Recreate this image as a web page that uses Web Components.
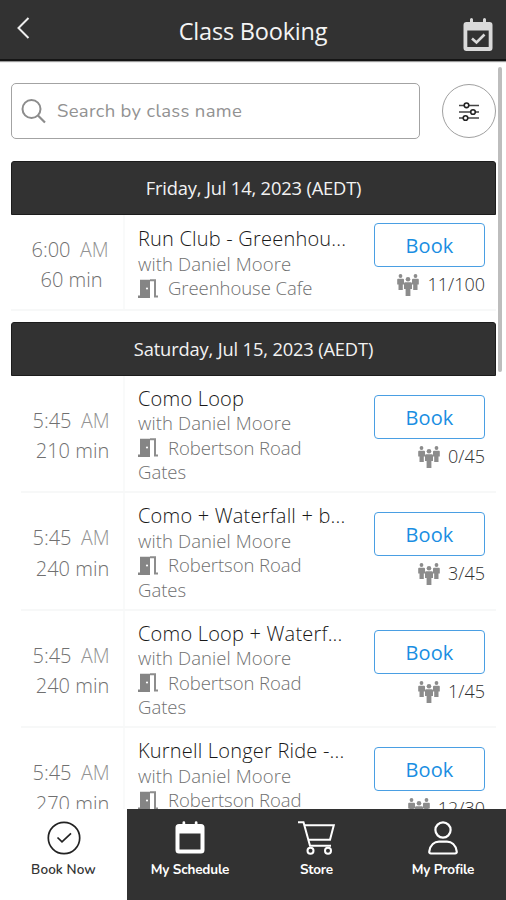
<!DOCTYPE html>
<html lang="en">
<head>
<meta charset="utf-8">
<title>Class Booking</title>
<style>
html,body{margin:0;height:100%;overflow:hidden;background:#fff}
body{font-family:"Open Sans","Noto Sans",sans-serif}
</style>
</head>
<body>
<booking-app></booking-app>
<script>
const icons = {
  back: [14,24,'<path d="M12.500 1 2.500 11 12.500 21" fill="none" stroke="#eee" stroke-width="2"/>'],
  calcheck: [30,33,'<path d="M3.500 4H7V1.500a1.500 1.500 0 0 1 3 0V4h10V1.500a1.500 1.500 0 0 1 3 0V4h3.500A3 3 0 0 1 29.500 7v23a3 3 0 0 1-3 3h-23a3 3 0 0 1-3-3V7a3 3 0 0 1 3-3z" fill="#d9d9d9"/><path d="M4.300 12.500h21.400v16.500H4.300z" fill="#323232"/><path d="m9 20.500 4.500 4 8-8" fill="none" stroke="#d9d9d9" stroke-width="2.600"/>'],
  search: [24,24,'<circle cx="10.500" cy="10" r="9" fill="none" stroke="#8c8c8c" stroke-width="2"/><path d="m17 16.500 7 7" stroke="#8c8c8c" stroke-width="2.200"/>'],
  filter: [20,20,'<path d="M0 4.500h20M0 11h20M0 17h20" stroke="#444" stroke-width="1.700"/><g fill="#fff" stroke="#222" stroke-width="1.600"><circle cx="7.500" cy="4.300" r="2.300"/><circle cx="14" cy="11" r="2.300"/><circle cx="6.500" cy="17" r="2.300"/></g>'],
  door: [20,19,'<path d="M0 16.500h2V.700h10V19H0z" fill="#858585"/><path d="M12 1.300h5v16.200h3" fill="none" stroke="#8d8d8d" stroke-width="2"/><circle cx="9" cy="9.500" r="1.100" fill="#fff"/>'],
  people: [22,22,'<g fill="#8c8c8c"><circle cx="3.500" cy="2" r="1.900"/><path d="M1 4.700h5q1 0 1 1v4.800H5.800V16H1.500v-5.500H.200V5.700q0-1 .8-1z"/><circle cx="18.500" cy="2" r="1.900"/><path d="M16 4.700h5q.8 0 .8 1v4.800h-1.300V16h-4.300v-5.500H15V5.700q0-1 1-1z"/><circle cx="11" cy="5.200" r="2.300"/><path d="M8.300 8.300h5.400q1.300 0 1.300 1.300v5.300h-1.600V22H8.600v-7.100H7V9.600q0-1.300 1.300-1.300z"/></g>'],
  check: [34,34,'<circle cx="17" cy="17" r="15.700" fill="none" stroke="#222" stroke-width="1.700"/><path d="m10.500 16.500 4.500 4.300 9-8.500" fill="none" stroke="#222" stroke-width="1.700"/>'],
  calendar: [30,33,'<path d="M4 3h3.500V1.500a1.200 1.200 0 0 1 2.700 0V3h9.600V1.500a1.200 1.200 0 0 1 2.700 0V3H26a3.500 3.500 0 0 1 3.500 3.500V29a3.500 3.500 0 0 1-3.500 3.500H4A3.500 3.500 0 0 1 .5 29V6.500A3.500 3.500 0 0 1 4 3z" fill="#fff"/><path d="M4.500 12.500h21v16h-21z" fill="#323232"/>'],
  cart: [38,34,'<g fill="none" stroke="#fff" stroke-width="2"><path d="M0 1.300h5.500l6.500 23.500h21"/><path d="M6.500 4.300h29.300L32 18.700H10.500"/><circle cx="12.500" cy="29.700" r="3"/><circle cx="30" cy="29.700" r="3"/></g>'],
  user: [30,34,'<g fill="none" stroke="#fff" stroke-width="2.200"><circle cx="15" cy="9" r="7.600"/><path d="M3 32.500q-2 0-1.700-2.200C2.300 24 6.500 20.700 11 20.700h8c4.500 0 8.700 3.300 9.700 9.600q.3 2.200-1.700 2.200z"/></g>']
};
const define = (name, css, html) => customElements.define(name, class extends HTMLElement {
  connectedCallback() {
    const a = n => this.getAttribute(n) || '';
    this.attachShadow({mode:'open'}).innerHTML =
      `<style>*{box-sizing:border-box}:host{box-sizing:border-box;display:block}${css}</style>${html(a)}`;
  }
});
define('ui-icon', ':host{flex:none}svg{display:block;overflow:visible}', a => {
  const [w,h,body] = icons[a('name')];
  return `<svg width="${w}" height="${h}" viewBox="0 0 ${w} ${h}">${body}</svg>`;
});
define('app-header', `
  :host{height:61px;flex:none;background:#323232;border-bottom:2px solid #151515;box-shadow:0 1px 1px #999;display:grid;grid-template-columns:60px 1fr 60px;position:relative;z-index:1}
  .back{padding:17px 0 0 16px}.cal{padding:18px 0 0 17px}
  h1{margin:0;text-align:center;font-size:23.5px;font-weight:400;line-height:62px;color:#f4f4f4;white-space:nowrap;letter-spacing:-.2px}`,
  () => `<ui-icon class="back" name="back"></ui-icon><h1><slot></slot></h1><ui-icon class="cal" name="calcheck"></ui-icon>`);
define('search-bar', `
  :host{display:flex;justify-content:space-between;height:56px;margin:22px 10px 0 11px}
  .box{width:409px;border:1.5px solid #a3a3a3;border-radius:5px;display:flex;align-items:center;gap:12px;padding-left:9px;color:#929292;font:400 18.500px/52px Nunito,"Open Sans",sans-serif;letter-spacing:.32px}
  .box span{margin-top:-1px}
  .round{width:54px;height:54px;margin-top:1px;border:1.5px solid #a0a0a0;border-radius:50%;display:grid;place-items:center}`,
  () => `<div class="box"><ui-icon name="search"></ui-icon><span><slot></slot></span></div><div class="round"><ui-icon name="filter"></ui-icon></div>`);
define('day-bar', `
  :host{height:54px;margin:0 10px 0 11px;background:#323232;border:1px solid #1c1c1c;border-radius:3px 3px 0 0;color:#f2f2f2;text-align:center;font-size:18.3px;line-height:52px;letter-spacing:-.15px;flex:none}`,
  () => `<slot></slot>`);
define('class-row', `
  :host{display:grid;grid-template-columns:104px 1fr 122px;margin:0 10px 0 21px;border-bottom:2px solid #f7f8f8;height:117.5px;flex:none;font-weight:320}
  :host([short]){height:96px;margin-left:11px;grid-template-columns:114px 1fr 122px}
  .time{border-right:2px solid #f9fafa;display:flex;flex-direction:column;justify-content:center;align-items:center;color:#707070;font-size:20px;line-height:30.500px;white-space:pre;padding-top:6px}
  :host([short]) .time{padding-left:8px}
  .time .t{margin-left:-2px}
  .time i{font-style:normal;color:#939393;font-size:19.5px;font-weight:300;margin-left:-1px}
  .time .len{margin-left:1px}
  .info{padding:11px 0 0 13px;color:#707070;font-size:18.5px;line-height:24.500px;white-space:nowrap}
  :host([short]) .info{padding-top:12px}
  .title{font-size:20px;color:#181818;letter-spacing:.2px}
  .who{letter-spacing:.1px}
  .loc{display:grid;grid-template-columns:20px auto;column-gap:10px;align-items:center;justify-content:start;letter-spacing:-.05px}
  .act{padding-top:19px}
  :host([short]) .act{padding-top:8px}
  .btn{width:111px;height:44px;border:1.5px solid #4a9fe3;border-radius:4px;color:#1a8ee2;font-size:20px;line-height:43px;text-align:center;letter-spacing:.1px;font-weight:400}
  .count{width:111px;display:flex;justify-content:flex-end;gap:8px;color:#303030;font-size:18px;line-height:34px}
  .count ui-icon{margin-top:7px}`,
  a => `<div class="time"><span class="t">${a('time')}  <i>AM</i></span><span class="len">${a('length')}</span></div>
  <div class="info"><div class="title">${a('name')}</div><div class="who">with Daniel Moore</div>
  <div class="loc"><ui-icon name="door"></ui-icon><span>${a('place')}</span></div><div class="wrap">${a('place2')}</div></div>
  <div class="act"><div class="btn">Book</div><div class="count"><ui-icon name="people"></ui-icon><span>${a('count')}</span></div></div>`);
define('nav-item', `
  :host{display:flex;flex-direction:column;align-items:center;background:#323232;color:#fff;font:700 13.500px/18px Nunito,"Open Sans",sans-serif;padding-top:12px;gap:6px;white-space:nowrap;letter-spacing:-.15px}
  :host([active]){background:#fff;color:#333;font-weight:600;letter-spacing:.1px}
  ui-icon{height:34px}`,
  a => `<ui-icon name="${a('icon')}"></ui-icon><slot></slot>`);
define('nav-bar', `:host{position:absolute;left:0;right:0;bottom:0;height:91px;display:grid;grid-template-columns:127px 126px 127px 126px}`, () => `<slot></slot>`);
define('booking-app', `
  :host{height:900px;width:506px;position:relative;overflow:hidden;display:flex;flex-direction:column;background:#fff}
  search-bar{flex:none;margin-bottom:22px}
  .gap{margin-top:10.5px}
  .scroll{position:absolute;left:498px;top:67px;width:4px;height:305px;background:#bdbdbd;border-radius:2px}`,
  () => `<app-header>Class Booking</app-header><search-bar>Search by class name</search-bar>
  <day-bar>Friday, Jul 14, 2023 (AEDT)</day-bar>
  <class-row short time="6:00" length="60 min" name="Run Club - Greenhou..." place="Greenhouse Cafe" count="11/100"></class-row>
  <day-bar class="gap">Saturday, Jul 15, 2023 (AEDT)</day-bar>
  <class-row time="5:45" length="210 min" name="Como Loop" place="Robertson Road" place2="Gates" count="0/45"></class-row>
  <class-row time="5:45" length="240 min" name="Como + Waterfall + b..." place="Robertson Road" place2="Gates" count="3/45"></class-row>
  <class-row time="5:45" length="240 min" name="Como Loop + Waterf..." place="Robertson Road" place2="Gates" count="1/45"></class-row>
  <class-row time="5:45" length="270 min" name="Kurnell Longer Ride -..." place="Robertson Road" place2="Gates" count="12/30"></class-row>
  <div class="scroll"></div>
  <nav-bar><nav-item active icon="check">Book Now</nav-item><nav-item icon="calendar">My Schedule</nav-item><nav-item icon="cart">Store</nav-item><nav-item icon="user">My Profile</nav-item></nav-bar>`);
</script>
</body>
</html>
